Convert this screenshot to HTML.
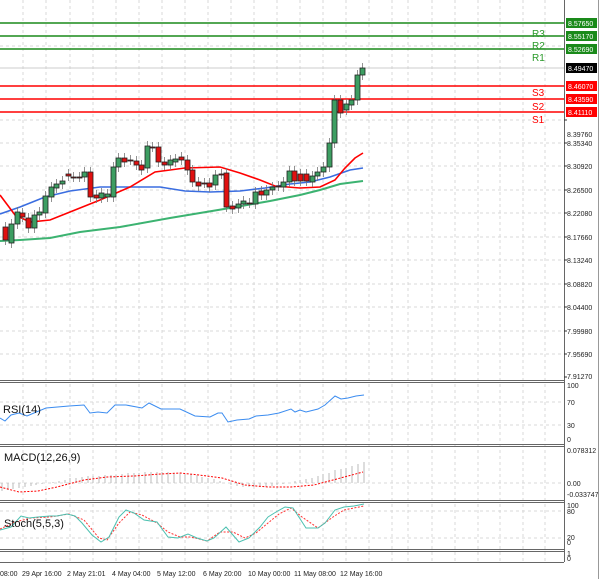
<!DOCTYPE html>
<html><head><meta charset="utf-8"><style>
html,body{margin:0;padding:0;background:#fff;}
svg{display:block;font-family:"Liberation Sans",sans-serif;}
.ax{font-size:7px;fill:#222;}
</style></head><body>
<svg id="s" width="600" height="579" viewBox="0 0 600 579" xmlns="http://www.w3.org/2000/svg">
<rect width="600" height="579" fill="#fff"/>
<g stroke="#d8d8d8" stroke-width="1" stroke-dasharray="3,3">
<path d="M0 23H564M0 46H564M0 68H564M0 120H564M0 143H564M0 166H564M0 190H564M0 213H564M0 237H564M0 260H564M0 284H564M0 307H564M0 331H564M0 354H564"/>
<path d="M0 402H564M0 425H564M0 483H564M0 511H564M0 538H564"/>
<path d="M23 0V562M46 0V562M70 0V562M93 0V562M116 0V562M139 0V562M162 0V562M185 0V562M208 0V562M231 0V562M254 0V562M277 0V562M300 0V562M323 0V562M346 0V562M369 0V562M392 0V562M408 0V562M432 0V562M455 0V562M478 0V562M500 0V562M523 0V562M545 0V562"/>
</g>
<g stroke="#666" stroke-width="1">
<path d="M0 380.5H564M0 382.5H564M0 444.5H564M0 446.5H564M0 500.5H564M0 502.5H564M0 549.5H564M0 551.5H564M0 562.5H564"/>
<path d="M564.5 0V562"/>
</g>
<g stroke-width="1.5">
<path d="M0 23H564" stroke="#1a8a1a"/>
<path d="M0 36H564" stroke="#1a8a1a"/>
<path d="M0 49H564" stroke="#1a8a1a"/>
<path d="M0 86H564" stroke="#f00"/>
<path d="M0 99H564" stroke="#f00"/>
<path d="M0 112H564" stroke="#f00"/>
</g>
<path d="M0 68H564" stroke="#ccc" stroke-width="1"/>
<g font-size="10" fill="#2a9a2a"><text x="532" y="37">R3</text><text x="532" y="49">R2</text><text x="532" y="61">R1</text></g>
<g font-size="10" fill="#f00"><text x="532" y="96">S3</text><text x="532" y="110">S2</text><text x="532" y="123">S1</text></g>
<polyline fill="none" stroke="#3cb371" stroke-width="2" points="0,241 20,240 50,238 80,232 120,227 170,218 230,208 270,201 300,195 320,190 340,184 363,181"/>
<polyline fill="none" stroke="#3a6de0" stroke-width="1.6" points="0,214 20,207 45,197 70,191 100,187 130,187 160,187 185,191 210,192 240,191 265,188 290,184 310,182 330,177 350,170 363,168"/>
<polyline fill="none" stroke="#f00" stroke-width="1.6" points="0,195 15,215 30,222 50,220 70,212 100,200 130,187 155,172 185,168 220,167 240,173 260,180 275,186 300,188 320,187 335,180 345,168 355,158 363,153"/>
<g id="c" stroke="#222" stroke-width="0.8"></g>
<g id="h" stroke="#bbb" stroke-width="1"></g>
<polyline fill="none" stroke="#f00" stroke-width="1" stroke-dasharray="2,1.5" points="0,487 19,492 38,491 57,487 84,480 107,477 134,476 161,474 180,473 199,475 222,478 245,485 268,487 291,487 314,485 333,480 348,476 363,472"/>
<polyline fill="none" stroke="#3b8cf0" stroke-width="1" points="0,418 5,421 11,415 19,413 27,416 34,413 46,408 69,406 84,405 90,413 98,412 107,413 115,405 126,405 142,408 149,403 161,409 180,409 195,416 210,417 218,413 222,413 228,422 237,420 249,419 256,416 268,415 279,413 291,409 295,412 300,410 306,412 318,409 325,405 335,396 341,399 348,398 356,396 364,395"/>
<polyline fill="none" stroke="#f33" stroke-width="1" stroke-dasharray="2,1.5" points="0,529 15,522 31,518 50,517 69,514 84,520 99,538 107,540 119,523 130,512 142,515 157,523 168,532 180,537 191,537 207,541 220,532 233,532 245,538 256,533 268,523 279,514 291,508 302,517 318,528 333,517 344,510 364,506"/>
<polyline fill="none" stroke="#4cc0b0" stroke-width="1" points="0,530 11,527 21,516 29,518 38,517 50,516 57,516 67,514 75,516 82,523 92,535 101,542 109,537 119,517 126,510 134,513 144,520 157,522 168,537 178,538 188,534 197,538 207,541 214,538 226,527 239,542 249,538 260,527 268,517 276,512 285,507 293,508 306,528 318,528 325,523 335,510 344,507 354,506 364,504"/>
<g font-size="11" fill="#111"><text x="3" y="413">RSI(14)</text><text x="4" y="461">MACD(12,26,9)</text><text x="4" y="527">Stoch(5,5,3)</text></g>
<g class="ax">
<text x="567" y="137">8.39760</text>
<text x="567" y="146">8.35340</text><text x="567" y="169">8.30920</text><text x="567" y="193">8.26500</text><text x="567" y="216">8.22080</text><text x="567" y="240">8.17660</text><text x="567" y="263">8.13240</text><text x="567" y="287">8.08820</text><text x="567" y="310">8.04400</text><text x="567" y="334">7.99980</text><text x="567" y="357">7.95690</text><text x="567" y="379">7.91270</text>
<text x="567" y="388">100</text><text x="567" y="405">70</text><text x="567" y="428">30</text><text x="567" y="442">0</text>
<text x="567" y="453">0.078312</text><text x="567" y="486">0.00</text><text x="567" y="497">-0.033747</text>
<text x="567" y="508">100</text><text x="567" y="514">80</text><text x="567" y="540">20</text><text x="567" y="545">0</text>
<text x="567" y="556">1</text><text x="567" y="561">0</text>
</g>
<g stroke="#333" stroke-width="1"><path d="M564 143h3M564 166h3M564 190h3M564 213h3M564 237h3M564 260h3M564 284h3M564 307h3M564 331h3M564 354h3M564 377h3M564 120h3"/></g>
<rect x="566" y="18" width="31" height="10" fill="#1a8a1a"/><text x="568" y="26" font-size="7" fill="#fff">8.57650</text>
<rect x="566" y="31" width="31" height="10" fill="#1a8a1a"/><text x="568" y="39" font-size="7" fill="#fff">8.55170</text>
<rect x="566" y="44" width="31" height="10" fill="#1a8a1a"/><text x="568" y="52" font-size="7" fill="#fff">8.52690</text>
<rect x="566" y="63" width="31" height="10" fill="#000"/><text x="568" y="71" font-size="7" fill="#fff">8.49470</text>
<rect x="566" y="81" width="31" height="10" fill="#f00"/><text x="568" y="89" font-size="7" fill="#fff">8.46070</text>
<rect x="566" y="94" width="31" height="10" fill="#f00"/><text x="568" y="102" font-size="7" fill="#fff">8.43590</text>
<rect x="566" y="107" width="31" height="10" fill="#f00"/><text x="568" y="115" font-size="7" fill="#fff">8.41110</text>
<path d="M598.5 0V579" stroke="#999"/>
<g class="ax">
<text x="0" y="576">08:00</text><text x="22" y="576">29 Apr 16:00</text><text x="67" y="576">2 May 21:01</text><text x="112" y="576">4 May 04:00</text><text x="157" y="576">5 May 12:00</text><text x="203" y="576">6 May 20:00</text><text x="248" y="576">10 May 00:00</text><text x="294" y="576">11 May 08:00</text><text x="340" y="576">12 May 16:00</text>
</g>
</svg>
<script>
(function(){
var NS="http://www.w3.org/2000/svg";
function el(p,n,a){var e=document.createElementNS(NS,n);for(var k in a)e.setAttribute(k,a[k]);p.appendChild(e);}
var d=[[5,227,240,0],[11,243,224,1],[17,224,212,1],[22,213,217,0],[28,218,228,0],[34,228,215,1],[39,215,212,1],[45,213,196,1],[51,197,187,1],[56,188,184,1],[62,184,181,1],[68,174,176,0],[73,177,177,0],[79,177,177,0],[84,177,172,1],[90,172,197,0],[96,195,198,0],[101,198,193,1],[107,197,194,1],[113,197,167,1],[118,167,158,1],[124,158,162,0],[130,160,160,0],[136,161,165,0],[141,165,170,0],[147,168,146,1],[152,147,147,0],[158,147,162,0],[164,162,165,0],[170,165,160,1],[175,162,159,1],[181,157,160,0],[187,160,170,0],[192,170,182,0],[198,182,186,0],[204,183,183,0],[209,183,187,0],[215,185,175,1],[221,174,174,0],[226,173,207,0],[232,206,209,0],[238,208,204,1],[243,204,201,1],[249,203,203,0],[255,204,192,1],[261,191,195,0],[266,195,190,1],[272,190,187,1],[278,186,186,0],[283,187,182,1],[289,182,171,1],[294,171,181,0],[300,174,181,0],[306,174,181,0],[312,182,176,1],[317,176,172,1],[323,172,167,1],[329,167,143,1],[334,143,100,1],[340,100,113,0],[346,110,104,1],[351,105,100,1],[357,100,75,1],[362,75,68,1]];
var g=document.getElementById('c');
d.forEach(function(c){var t=Math.min(c[1],c[2]),b=Math.max(c[1],c[2]);var h=Math.max(b-t,1);
el(g,'line',{x1:c[0]+.5,x2:c[0]+.5,y1:t-5,y2:b+5,stroke:'#777'});
el(g,'rect',{x:c[0]-2,y:t,width:5,height:h,fill:c[3]?'#3d9e62':'#e01010'});});
var hv=[[0,8],[6,7],[11,6],[17,5],[23,4],[29,3],[34,2],[40,1],[46,0],[51,-1],[57,-2],[63,-3],[68,-5],[74,-5],[80,-6],[86,-7],[91,-7],[97,-7],[103,-8],[109,-8],[114,-8],[120,-9],[126,-10],[132,-10],[137,-10],[143,-11],[149,-11],[155,-11],[160,-11],[166,-11],[172,-10],[178,-10],[183,-9],[189,-9],[195,-8],[200,-6],[206,-5],[212,-4],[218,-2],[224,0],[229,2],[235,3],[241,4],[247,4],[252,4],[258,4],[264,4],[270,3],[275,2],[281,1],[287,0],[293,-2],[298,-3],[304,-4],[310,-5],[316,-7],[321,-9],[327,-10],[333,-13],[339,-14],[344,-15],[350,-17],[356,-19],[362,-21]];
var hg=document.getElementById('h');
hv.forEach(function(v){el(hg,'line',{x1:v[0]+2,x2:v[0]+2,y1:483,y2:483+v[1]});});
})();
</script>
</body></html>
